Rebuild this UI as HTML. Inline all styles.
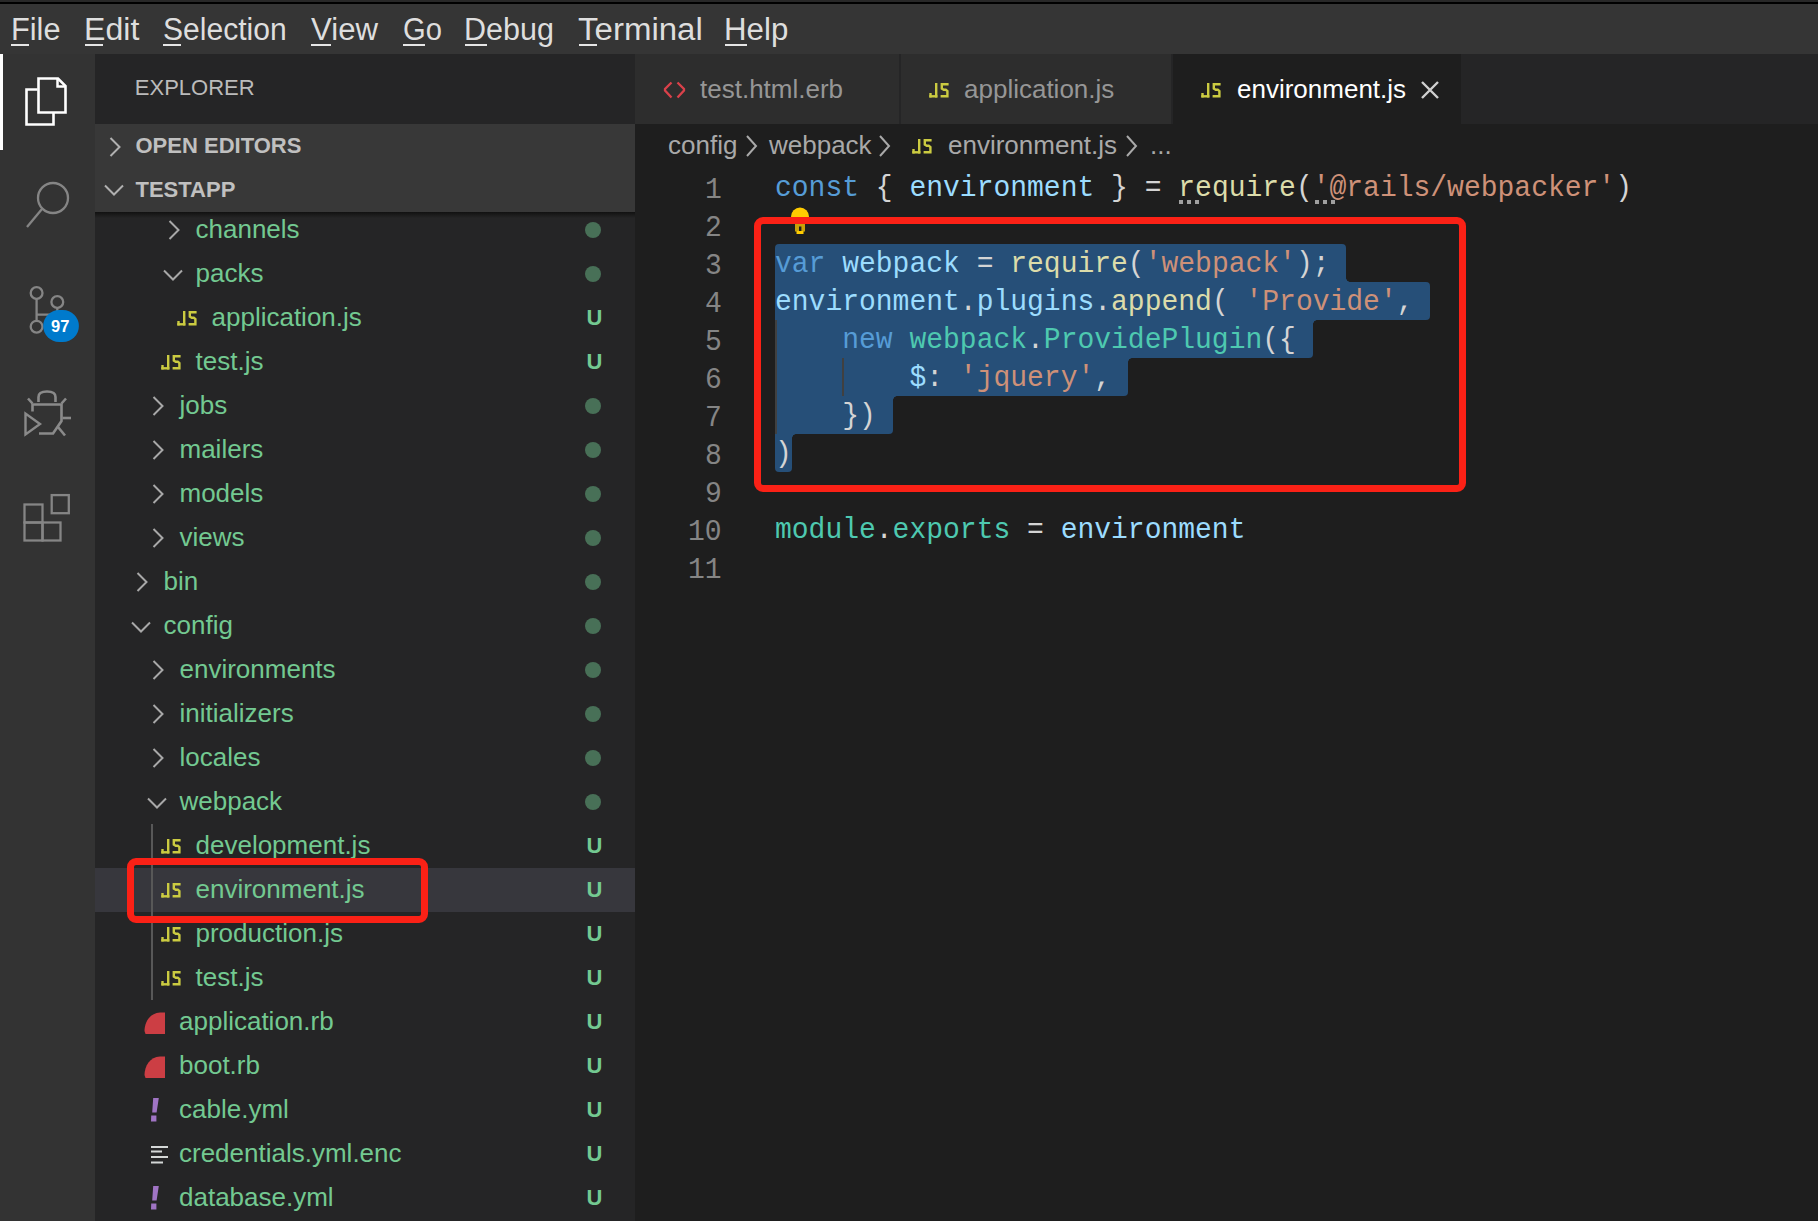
<!DOCTYPE html>
<html><head><meta charset="utf-8"><style>
html,body{margin:0;padding:0;width:1818px;height:1221px;overflow:hidden;background:#1e1e1e;position:relative}
.mw{display:inline-block}
</style></head><body>
<div style="position:absolute;left:0px;top:0px;width:1818px;height:2px;background:#282828;"></div>
<div style="position:absolute;left:0px;top:2px;width:1818px;height:2.2px;background:#000000;"></div>
<div style="position:absolute;left:0px;top:4.2px;width:1818px;height:49.8px;background:#353535;"></div>
<div style="position:absolute;left:10.71px;top:29.56px;font-family:'Liberation Sans', sans-serif;font-size:31px;line-height:0;white-space:pre;color:#dedede;font-weight:normal;transform:scaleX(0.9916);transform-origin:0 0;">File</div>
<div style="position:absolute;left:83.5px;top:29.56px;font-family:'Liberation Sans', sans-serif;font-size:31px;line-height:0;white-space:pre;color:#dedede;font-weight:normal;transform:scaleX(1.0355);transform-origin:0 0;">Edit</div>
<div style="position:absolute;left:163.03px;top:29.56px;font-family:'Liberation Sans', sans-serif;font-size:31px;line-height:0;white-space:pre;color:#dedede;font-weight:normal;transform:scaleX(0.9696);transform-origin:0 0;">Selection</div>
<div style="position:absolute;left:311.2px;top:29.56px;font-family:'Liberation Sans', sans-serif;font-size:31px;line-height:0;white-space:pre;color:#dedede;font-weight:normal;transform:scaleX(1.0045);transform-origin:0 0;">View</div>
<div style="position:absolute;left:403.29px;top:29.56px;font-family:'Liberation Sans', sans-serif;font-size:31px;line-height:0;white-space:pre;color:#dedede;font-weight:normal;transform:scaleX(0.941);transform-origin:0 0;">Go</div>
<div style="position:absolute;left:464.43px;top:29.56px;font-family:'Liberation Sans', sans-serif;font-size:31px;line-height:0;white-space:pre;color:#dedede;font-weight:normal;transform:scaleX(0.984);transform-origin:0 0;">Debug</div>
<div style="position:absolute;left:578.41px;top:29.56px;font-family:'Liberation Sans', sans-serif;font-size:31px;line-height:0;white-space:pre;color:#dedede;font-weight:normal;transform:scaleX(1.0653);transform-origin:0 0;">Terminal</div>
<div style="position:absolute;left:723.98px;top:29.56px;font-family:'Liberation Sans', sans-serif;font-size:31px;line-height:0;white-space:pre;color:#dedede;font-weight:normal;transform:scaleX(1.0083);transform-origin:0 0;">Help</div>
<div style="position:absolute;left:11px;top:43.8px;width:18.1px;height:2.2px;background:#e6e6e6;"></div>
<div style="position:absolute;left:85.4px;top:43.8px;width:17.6px;height:2.2px;background:#e6e6e6;"></div>
<div style="position:absolute;left:163.3px;top:43.8px;width:17.6px;height:2.2px;background:#e6e6e6;"></div>
<div style="position:absolute;left:311.3px;top:43.8px;width:19.4px;height:2.2px;background:#e6e6e6;"></div>
<div style="position:absolute;left:403px;top:43.8px;width:21.6px;height:2.2px;background:#e6e6e6;"></div>
<div style="position:absolute;left:465px;top:43.8px;width:22px;height:2.2px;background:#e6e6e6;"></div>
<div style="position:absolute;left:579px;top:43.8px;width:18px;height:2.2px;background:#e6e6e6;"></div>
<div style="position:absolute;left:725.3px;top:43.8px;width:22.0px;height:2.2px;background:#e6e6e6;"></div>
<div style="position:absolute;left:0px;top:54px;width:95px;height:1167px;background:#333333;"></div>
<div style="position:absolute;left:0px;top:54px;width:3px;height:96px;background:#ffffff;"></div>
<svg style="position:absolute;left:0;top:54px" width="95" height="520" viewBox="0 54 95 520">
 <g fill="none" stroke="#ffffff" stroke-width="2.6">
  <path d="M37.5 89.5 H26.5 V124.5 H53.5 V112.5"/>
  <path d="M38.5 78.5 H58 L65.5 86 V112.5 H38.5 Z"/>
  <path d="M57.5 79 V86.5 H65" stroke-width="2.5"/>
 </g>
 <g fill="none" stroke="#858585" stroke-width="2.3">
  <circle cx="53" cy="198" r="15"/>
  <path d="M42 209 L27 227"/>
 </g>
 <g fill="none" stroke="#858585" stroke-width="2.3">
  <circle cx="36.6" cy="293" r="5.9"/>
  <circle cx="57.3" cy="302" r="5.9"/>
  <circle cx="36.6" cy="326.7" r="5.9"/>
  <path d="M36.6 299 V320.5"/>
  <path d="M57.3 308 V312 Q57.3 314.6 54 314.6 H37"/>
 </g>
 <rect x="43.2" y="310" width="35.7" height="32" rx="16" fill="#007acc"/>
 <g fill="none" stroke="#8a8a8a" stroke-width="2.6" stroke-linejoin="miter">
  <path d="M38.5 402 V397 Q38.5 391.5 47 391.5 Q55.5 391.5 55.5 397 V402"/>
  <path d="M32.5 411.5 V404.5 H61.5 V421 L53 433.5 H39"/>
  <path d="M28 398.5 L32.5 403.5"/>
  <path d="M66 398.5 L61.5 403.5"/>
  <path d="M62.5 418 H71"/>
  <path d="M58 427 L65 435.5"/>
  <path d="M25.5 413.5 V434.5 L40 424 Z" stroke-width="2.4"/>
 </g>
 <g fill="none" stroke="#858585" stroke-width="2.3">
  <rect x="24.5" y="504.5" width="18" height="18"/>
  <rect x="24.5" y="522.5" width="18" height="18"/>
  <rect x="42.5" y="522.5" width="18" height="18"/>
  <rect x="51.7" y="495.1" width="17.1" height="18.1"/>
 </g>
</svg>
<div style="position:absolute;left:51px;top:326.28px;font-family:'Liberation Sans', sans-serif;font-size:16.5px;line-height:0;white-space:pre;color:#ffffff;font-weight:bold;">97</div>
<div style="position:absolute;left:95px;top:54px;width:540px;height:1167px;background:#252526;"></div>
<div style="position:absolute;left:134.8px;top:88.08px;font-family:'Liberation Sans', sans-serif;font-size:22px;line-height:0;white-space:pre;color:#bbbbbb;font-weight:normal;">EXPLORER</div>
<div style="position:absolute;left:95px;top:124px;width:540px;height:88px;background:#383838;"></div>
<div style="position:absolute;left:135.5px;top:145.88px;font-family:'Liberation Sans', sans-serif;font-size:22px;line-height:0;white-space:pre;color:#c0c0c0;font-weight:bold;">OPEN EDITORS</div>
<div style="position:absolute;left:135.5px;top:189.88px;font-family:'Liberation Sans', sans-serif;font-size:22px;line-height:0;white-space:pre;color:#c0c0c0;font-weight:bold;">TESTAPP</div>
<svg style="position:absolute;left:107px;top:134.5px" width="16" height="24"><path d="M3.5 3 L12.5 12 L3.5 21" fill="none" stroke="#b0b0b0" stroke-width="2"/></svg>
<svg style="position:absolute;left:102px;top:182px" width="24" height="16"><path d="M3 3.5 L12 12.5 L21 3.5" fill="none" stroke="#b0b0b0" stroke-width="2"/></svg>
<div style="position:absolute;left:95px;top:868px;width:540px;height:44px;background:#37373d;"></div>
<div style="position:absolute;left:151px;top:824px;width:2px;height:176px;background:#585858;"></div>
<svg style="position:absolute;left:165.5px;top:218px" width="16" height="24"><path d="M3.5 3 L12.5 12 L3.5 21" fill="none" stroke="#a8a8a8" stroke-width="2"/></svg>
<div style="position:absolute;left:195.5px;top:228.99px;font-family:'Liberation Sans', sans-serif;font-size:26px;line-height:0;white-space:pre;color:#73c991;font-weight:normal;">channels</div>
<div style="position:absolute;left:585px;top:222px;width:16px;height:16px;border-radius:50%;background:#487057"></div>
<svg style="position:absolute;left:161.0px;top:266.7px" width="24" height="16"><path d="M3 3.5 L12 12.5 L21 3.5" fill="none" stroke="#a8a8a8" stroke-width="2"/></svg>
<div style="position:absolute;left:195.5px;top:272.99px;font-family:'Liberation Sans', sans-serif;font-size:26px;line-height:0;white-space:pre;color:#73c991;font-weight:normal;">packs</div>
<div style="position:absolute;left:585px;top:266px;width:16px;height:16px;border-radius:50%;background:#487057"></div>
<svg style="position:absolute;left:176.5px;top:310px" width="22" height="17" viewBox="0 0 22 17"><g fill="#cbcb41"><rect x="6" y="1" width="2.4" height="14.5"/><rect x="0.3" y="13.1" width="8.1" height="2.4"/><rect x="0.3" y="11" width="2.4" height="4.5"/><path d="M11.6 1 H19.6 V3.4 H14 V6 L15 6.6 H17.2 L19.6 8.6 V15.5 H11.6 V13.1 H17.2 V9.6 L16.4 9 H14.4 L11.6 7.2 Z"/></g></svg>
<div style="position:absolute;left:211.5px;top:316.99px;font-family:'Liberation Sans', sans-serif;font-size:26px;line-height:0;white-space:pre;color:#73c991;font-weight:normal;">application.js</div>
<div style="position:absolute;left:586.6px;top:318.08px;font-family:'Liberation Sans', sans-serif;font-size:22px;line-height:0;white-space:pre;color:#73c991;font-weight:bold;">U</div>
<svg style="position:absolute;left:160.5px;top:354px" width="22" height="17" viewBox="0 0 22 17"><g fill="#cbcb41"><rect x="6" y="1" width="2.4" height="14.5"/><rect x="0.3" y="13.1" width="8.1" height="2.4"/><rect x="0.3" y="11" width="2.4" height="4.5"/><path d="M11.6 1 H19.6 V3.4 H14 V6 L15 6.6 H17.2 L19.6 8.6 V15.5 H11.6 V13.1 H17.2 V9.6 L16.4 9 H14.4 L11.6 7.2 Z"/></g></svg>
<div style="position:absolute;left:195.5px;top:360.99px;font-family:'Liberation Sans', sans-serif;font-size:26px;line-height:0;white-space:pre;color:#73c991;font-weight:normal;">test.js</div>
<div style="position:absolute;left:586.6px;top:362.08px;font-family:'Liberation Sans', sans-serif;font-size:22px;line-height:0;white-space:pre;color:#73c991;font-weight:bold;">U</div>
<svg style="position:absolute;left:149.5px;top:394px" width="16" height="24"><path d="M3.5 3 L12.5 12 L3.5 21" fill="none" stroke="#a8a8a8" stroke-width="2"/></svg>
<div style="position:absolute;left:179.5px;top:404.99px;font-family:'Liberation Sans', sans-serif;font-size:26px;line-height:0;white-space:pre;color:#73c991;font-weight:normal;">jobs</div>
<div style="position:absolute;left:585px;top:398px;width:16px;height:16px;border-radius:50%;background:#487057"></div>
<svg style="position:absolute;left:149.5px;top:438px" width="16" height="24"><path d="M3.5 3 L12.5 12 L3.5 21" fill="none" stroke="#a8a8a8" stroke-width="2"/></svg>
<div style="position:absolute;left:179.5px;top:448.99px;font-family:'Liberation Sans', sans-serif;font-size:26px;line-height:0;white-space:pre;color:#73c991;font-weight:normal;">mailers</div>
<div style="position:absolute;left:585px;top:442px;width:16px;height:16px;border-radius:50%;background:#487057"></div>
<svg style="position:absolute;left:149.5px;top:482px" width="16" height="24"><path d="M3.5 3 L12.5 12 L3.5 21" fill="none" stroke="#a8a8a8" stroke-width="2"/></svg>
<div style="position:absolute;left:179.5px;top:492.99px;font-family:'Liberation Sans', sans-serif;font-size:26px;line-height:0;white-space:pre;color:#73c991;font-weight:normal;">models</div>
<div style="position:absolute;left:585px;top:486px;width:16px;height:16px;border-radius:50%;background:#487057"></div>
<svg style="position:absolute;left:149.5px;top:526px" width="16" height="24"><path d="M3.5 3 L12.5 12 L3.5 21" fill="none" stroke="#a8a8a8" stroke-width="2"/></svg>
<div style="position:absolute;left:179.5px;top:536.99px;font-family:'Liberation Sans', sans-serif;font-size:26px;line-height:0;white-space:pre;color:#73c991;font-weight:normal;">views</div>
<div style="position:absolute;left:585px;top:530px;width:16px;height:16px;border-radius:50%;background:#487057"></div>
<svg style="position:absolute;left:133.5px;top:570px" width="16" height="24"><path d="M3.5 3 L12.5 12 L3.5 21" fill="none" stroke="#a8a8a8" stroke-width="2"/></svg>
<div style="position:absolute;left:163.5px;top:580.99px;font-family:'Liberation Sans', sans-serif;font-size:26px;line-height:0;white-space:pre;color:#73c991;font-weight:normal;">bin</div>
<div style="position:absolute;left:585px;top:574px;width:16px;height:16px;border-radius:50%;background:#487057"></div>
<svg style="position:absolute;left:129.0px;top:618.7px" width="24" height="16"><path d="M3 3.5 L12 12.5 L21 3.5" fill="none" stroke="#a8a8a8" stroke-width="2"/></svg>
<div style="position:absolute;left:163.5px;top:624.99px;font-family:'Liberation Sans', sans-serif;font-size:26px;line-height:0;white-space:pre;color:#73c991;font-weight:normal;">config</div>
<div style="position:absolute;left:585px;top:618px;width:16px;height:16px;border-radius:50%;background:#487057"></div>
<svg style="position:absolute;left:149.5px;top:658px" width="16" height="24"><path d="M3.5 3 L12.5 12 L3.5 21" fill="none" stroke="#a8a8a8" stroke-width="2"/></svg>
<div style="position:absolute;left:179.5px;top:668.99px;font-family:'Liberation Sans', sans-serif;font-size:26px;line-height:0;white-space:pre;color:#73c991;font-weight:normal;">environments</div>
<div style="position:absolute;left:585px;top:662px;width:16px;height:16px;border-radius:50%;background:#487057"></div>
<svg style="position:absolute;left:149.5px;top:702px" width="16" height="24"><path d="M3.5 3 L12.5 12 L3.5 21" fill="none" stroke="#a8a8a8" stroke-width="2"/></svg>
<div style="position:absolute;left:179.5px;top:712.99px;font-family:'Liberation Sans', sans-serif;font-size:26px;line-height:0;white-space:pre;color:#73c991;font-weight:normal;">initializers</div>
<div style="position:absolute;left:585px;top:706px;width:16px;height:16px;border-radius:50%;background:#487057"></div>
<svg style="position:absolute;left:149.5px;top:746px" width="16" height="24"><path d="M3.5 3 L12.5 12 L3.5 21" fill="none" stroke="#a8a8a8" stroke-width="2"/></svg>
<div style="position:absolute;left:179.5px;top:756.99px;font-family:'Liberation Sans', sans-serif;font-size:26px;line-height:0;white-space:pre;color:#73c991;font-weight:normal;">locales</div>
<div style="position:absolute;left:585px;top:750px;width:16px;height:16px;border-radius:50%;background:#487057"></div>
<svg style="position:absolute;left:145.0px;top:794.7px" width="24" height="16"><path d="M3 3.5 L12 12.5 L21 3.5" fill="none" stroke="#a8a8a8" stroke-width="2"/></svg>
<div style="position:absolute;left:179.5px;top:800.99px;font-family:'Liberation Sans', sans-serif;font-size:26px;line-height:0;white-space:pre;color:#73c991;font-weight:normal;">webpack</div>
<div style="position:absolute;left:585px;top:794px;width:16px;height:16px;border-radius:50%;background:#487057"></div>
<svg style="position:absolute;left:160.5px;top:838px" width="22" height="17" viewBox="0 0 22 17"><g fill="#cbcb41"><rect x="6" y="1" width="2.4" height="14.5"/><rect x="0.3" y="13.1" width="8.1" height="2.4"/><rect x="0.3" y="11" width="2.4" height="4.5"/><path d="M11.6 1 H19.6 V3.4 H14 V6 L15 6.6 H17.2 L19.6 8.6 V15.5 H11.6 V13.1 H17.2 V9.6 L16.4 9 H14.4 L11.6 7.2 Z"/></g></svg>
<div style="position:absolute;left:195.5px;top:844.99px;font-family:'Liberation Sans', sans-serif;font-size:26px;line-height:0;white-space:pre;color:#73c991;font-weight:normal;">development.js</div>
<div style="position:absolute;left:586.6px;top:846.08px;font-family:'Liberation Sans', sans-serif;font-size:22px;line-height:0;white-space:pre;color:#73c991;font-weight:bold;">U</div>
<svg style="position:absolute;left:160.5px;top:882px" width="22" height="17" viewBox="0 0 22 17"><g fill="#cbcb41"><rect x="6" y="1" width="2.4" height="14.5"/><rect x="0.3" y="13.1" width="8.1" height="2.4"/><rect x="0.3" y="11" width="2.4" height="4.5"/><path d="M11.6 1 H19.6 V3.4 H14 V6 L15 6.6 H17.2 L19.6 8.6 V15.5 H11.6 V13.1 H17.2 V9.6 L16.4 9 H14.4 L11.6 7.2 Z"/></g></svg>
<div style="position:absolute;left:195.5px;top:888.99px;font-family:'Liberation Sans', sans-serif;font-size:26px;line-height:0;white-space:pre;color:#73c991;font-weight:normal;">environment.js</div>
<div style="position:absolute;left:586.6px;top:890.08px;font-family:'Liberation Sans', sans-serif;font-size:22px;line-height:0;white-space:pre;color:#73c991;font-weight:bold;">U</div>
<svg style="position:absolute;left:160.5px;top:926px" width="22" height="17" viewBox="0 0 22 17"><g fill="#cbcb41"><rect x="6" y="1" width="2.4" height="14.5"/><rect x="0.3" y="13.1" width="8.1" height="2.4"/><rect x="0.3" y="11" width="2.4" height="4.5"/><path d="M11.6 1 H19.6 V3.4 H14 V6 L15 6.6 H17.2 L19.6 8.6 V15.5 H11.6 V13.1 H17.2 V9.6 L16.4 9 H14.4 L11.6 7.2 Z"/></g></svg>
<div style="position:absolute;left:195.5px;top:932.99px;font-family:'Liberation Sans', sans-serif;font-size:26px;line-height:0;white-space:pre;color:#73c991;font-weight:normal;">production.js</div>
<div style="position:absolute;left:586.6px;top:934.08px;font-family:'Liberation Sans', sans-serif;font-size:22px;line-height:0;white-space:pre;color:#73c991;font-weight:bold;">U</div>
<svg style="position:absolute;left:160.5px;top:970px" width="22" height="17" viewBox="0 0 22 17"><g fill="#cbcb41"><rect x="6" y="1" width="2.4" height="14.5"/><rect x="0.3" y="13.1" width="8.1" height="2.4"/><rect x="0.3" y="11" width="2.4" height="4.5"/><path d="M11.6 1 H19.6 V3.4 H14 V6 L15 6.6 H17.2 L19.6 8.6 V15.5 H11.6 V13.1 H17.2 V9.6 L16.4 9 H14.4 L11.6 7.2 Z"/></g></svg>
<div style="position:absolute;left:195.5px;top:976.99px;font-family:'Liberation Sans', sans-serif;font-size:26px;line-height:0;white-space:pre;color:#73c991;font-weight:normal;">test.js</div>
<div style="position:absolute;left:586.6px;top:978.08px;font-family:'Liberation Sans', sans-serif;font-size:22px;line-height:0;white-space:pre;color:#73c991;font-weight:bold;">U</div>
<svg style="position:absolute;left:143.5px;top:1011.5px" width="22" height="23" viewBox="0 0 22 23"><path d="M1.5 22 L0.5 19 C0.5 10 6 1 16 0.5 L21 0.5 L21 22 Z" fill="#cc3e44"/></svg>
<div style="position:absolute;left:179px;top:1020.99px;font-family:'Liberation Sans', sans-serif;font-size:26px;line-height:0;white-space:pre;color:#73c991;font-weight:normal;">application.rb</div>
<div style="position:absolute;left:586.6px;top:1022.08px;font-family:'Liberation Sans', sans-serif;font-size:22px;line-height:0;white-space:pre;color:#73c991;font-weight:bold;">U</div>
<svg style="position:absolute;left:143.5px;top:1055.5px" width="22" height="23" viewBox="0 0 22 23"><path d="M1.5 22 L0.5 19 C0.5 10 6 1 16 0.5 L21 0.5 L21 22 Z" fill="#cc3e44"/></svg>
<div style="position:absolute;left:179px;top:1064.99px;font-family:'Liberation Sans', sans-serif;font-size:26px;line-height:0;white-space:pre;color:#73c991;font-weight:normal;">boot.rb</div>
<div style="position:absolute;left:586.6px;top:1066.08px;font-family:'Liberation Sans', sans-serif;font-size:22px;line-height:0;white-space:pre;color:#73c991;font-weight:bold;">U</div>
<svg style="position:absolute;left:150px;top:1098px" width="10" height="26" viewBox="0 0 10 26"><path d="M3.2 0 H8.8 L6.6 14.5 H2.2 Z M1.2 17.6 H6.4 V23.6 H1 Z" fill="#a074c4"/></svg>
<div style="position:absolute;left:179px;top:1108.99px;font-family:'Liberation Sans', sans-serif;font-size:26px;line-height:0;white-space:pre;color:#73c991;font-weight:normal;">cable.yml</div>
<div style="position:absolute;left:586.6px;top:1110.08px;font-family:'Liberation Sans', sans-serif;font-size:22px;line-height:0;white-space:pre;color:#73c991;font-weight:bold;">U</div>
<svg style="position:absolute;left:150.5px;top:1146px" width="18" height="18" viewBox="0 0 18 18"><g fill="#d4d7d6"><rect x="0" y="0" width="17" height="2"/><rect x="0" y="4.5" width="11" height="2"/><rect x="0" y="10" width="17" height="2"/><rect x="0" y="15.5" width="12" height="2"/></g></svg>
<div style="position:absolute;left:179px;top:1152.99px;font-family:'Liberation Sans', sans-serif;font-size:26px;line-height:0;white-space:pre;color:#73c991;font-weight:normal;">credentials.yml.enc</div>
<div style="position:absolute;left:586.6px;top:1154.08px;font-family:'Liberation Sans', sans-serif;font-size:22px;line-height:0;white-space:pre;color:#73c991;font-weight:bold;">U</div>
<svg style="position:absolute;left:150px;top:1186px" width="10" height="26" viewBox="0 0 10 26"><path d="M3.2 0 H8.8 L6.6 14.5 H2.2 Z M1.2 17.6 H6.4 V23.6 H1 Z" fill="#a074c4"/></svg>
<div style="position:absolute;left:179px;top:1196.99px;font-family:'Liberation Sans', sans-serif;font-size:26px;line-height:0;white-space:pre;color:#73c991;font-weight:normal;">database.yml</div>
<div style="position:absolute;left:586.6px;top:1198.08px;font-family:'Liberation Sans', sans-serif;font-size:22px;line-height:0;white-space:pre;color:#73c991;font-weight:bold;">U</div>
<div style="position:absolute;left:95px;top:212px;width:540px;height:6px;background:linear-gradient(#111111, rgba(17,17,17,0));"></div>
<div style="position:absolute;left:127.2px;top:858.2px;width:300.5px;height:64.5px;box-sizing:border-box;border:7px solid #fb2116;border-radius:9px"></div>
<div style="position:absolute;left:635px;top:54px;width:1183px;height:70px;background:#252526;"></div>
<div style="position:absolute;left:635px;top:54px;width:264px;height:70px;background:#2d2d2d;"></div>
<div style="position:absolute;left:901px;top:54px;width:270px;height:70px;background:#2d2d2d;"></div>
<div style="position:absolute;left:1173px;top:54px;width:288px;height:70px;background:#1e1e1e;"></div>
<div style="position:absolute;left:635px;top:124px;width:1183px;height:1097px;background:#1e1e1e;"></div>
<svg style="position:absolute;left:662px;top:80px" width="24" height="20" viewBox="0 0 24 20"><path d="M9.5 2.5 L3 9 V10.5 L9.5 17.5 M15.5 2.5 L22 9 V10.5 L15.5 17.5" fill="none" stroke="#d9414a" stroke-width="2.3"/></svg>
<div style="position:absolute;left:700px;top:88.89px;font-family:'Liberation Sans', sans-serif;font-size:26px;line-height:0;white-space:pre;color:#969696;font-weight:normal;">test.html.erb</div>
<svg style="position:absolute;left:929px;top:82px" width="22" height="17" viewBox="0 0 22 17"><g fill="#cbcb41"><rect x="6" y="1" width="2.4" height="14.5"/><rect x="0.3" y="13.1" width="8.1" height="2.4"/><rect x="0.3" y="11" width="2.4" height="4.5"/><path d="M11.6 1 H19.6 V3.4 H14 V6 L15 6.6 H17.2 L19.6 8.6 V15.5 H11.6 V13.1 H17.2 V9.6 L16.4 9 H14.4 L11.6 7.2 Z"/></g></svg>
<div style="position:absolute;left:964px;top:88.89px;font-family:'Liberation Sans', sans-serif;font-size:26px;line-height:0;white-space:pre;color:#969696;font-weight:normal;">application.js</div>
<svg style="position:absolute;left:1201px;top:82px" width="22" height="17" viewBox="0 0 22 17"><g fill="#cbcb41"><rect x="6" y="1" width="2.4" height="14.5"/><rect x="0.3" y="13.1" width="8.1" height="2.4"/><rect x="0.3" y="11" width="2.4" height="4.5"/><path d="M11.6 1 H19.6 V3.4 H14 V6 L15 6.6 H17.2 L19.6 8.6 V15.5 H11.6 V13.1 H17.2 V9.6 L16.4 9 H14.4 L11.6 7.2 Z"/></g></svg>
<div style="position:absolute;left:1237px;top:88.89px;font-family:'Liberation Sans', sans-serif;font-size:26px;line-height:0;white-space:pre;color:#ffffff;font-weight:normal;">environment.js</div>
<svg style="position:absolute;left:1419px;top:79px" width="22" height="22" viewBox="0 0 22 22"><path d="M3 3 L19 19 M19 3 L3 19" stroke="#d0d0d0" stroke-width="2.4"/></svg>
<div style="position:absolute;left:668px;top:144.99px;font-family:'Liberation Sans', sans-serif;font-size:26px;line-height:0;white-space:pre;color:#a9a9a9;font-weight:normal;">config</div>
<svg style="position:absolute;left:744px;top:134px" width="14" height="24" viewBox="0 0 14 24"><path d="M3 2 L12 12 L3 22" fill="none" stroke="#a9a9a9" stroke-width="2"/></svg>
<div style="position:absolute;left:769px;top:144.99px;font-family:'Liberation Sans', sans-serif;font-size:26px;line-height:0;white-space:pre;color:#a9a9a9;font-weight:normal;">webpack</div>
<svg style="position:absolute;left:877px;top:134px" width="14" height="24" viewBox="0 0 14 24"><path d="M3 2 L12 12 L3 22" fill="none" stroke="#a9a9a9" stroke-width="2"/></svg>
<svg style="position:absolute;left:912px;top:138px" width="22" height="17" viewBox="0 0 22 17"><g fill="#cbcb41"><rect x="6" y="1" width="2.4" height="14.5"/><rect x="0.3" y="13.1" width="8.1" height="2.4"/><rect x="0.3" y="11" width="2.4" height="4.5"/><path d="M11.6 1 H19.6 V3.4 H14 V6 L15 6.6 H17.2 L19.6 8.6 V15.5 H11.6 V13.1 H17.2 V9.6 L16.4 9 H14.4 L11.6 7.2 Z"/></g></svg>
<div style="position:absolute;left:948px;top:144.99px;font-family:'Liberation Sans', sans-serif;font-size:26px;line-height:0;white-space:pre;color:#a9a9a9;font-weight:normal;">environment.js</div>
<svg style="position:absolute;left:1124px;top:134px" width="14" height="24" viewBox="0 0 14 24"><path d="M3 2 L12 12 L3 22" fill="none" stroke="#a9a9a9" stroke-width="2"/></svg>
<div style="position:absolute;left:1150px;top:144.99px;font-family:'Liberation Sans', sans-serif;font-size:26px;line-height:0;white-space:pre;color:#a9a9a9;font-weight:normal;">...</div>
<div style="position:absolute;left:705.2px;top:190.22px;font-family:'Liberation Mono', monospace;font-size:30px;line-height:0;white-space:pre;color:#858585;font-weight:normal;transform:scaleX(0.93333);transform-origin:0 0;">1</div>
<div style="position:absolute;left:705.2px;top:228.22px;font-family:'Liberation Mono', monospace;font-size:30px;line-height:0;white-space:pre;color:#858585;font-weight:normal;transform:scaleX(0.93333);transform-origin:0 0;">2</div>
<div style="position:absolute;left:705.2px;top:266.22px;font-family:'Liberation Mono', monospace;font-size:30px;line-height:0;white-space:pre;color:#858585;font-weight:normal;transform:scaleX(0.93333);transform-origin:0 0;">3</div>
<div style="position:absolute;left:705.2px;top:304.22px;font-family:'Liberation Mono', monospace;font-size:30px;line-height:0;white-space:pre;color:#858585;font-weight:normal;transform:scaleX(0.93333);transform-origin:0 0;">4</div>
<div style="position:absolute;left:705.2px;top:342.22px;font-family:'Liberation Mono', monospace;font-size:30px;line-height:0;white-space:pre;color:#858585;font-weight:normal;transform:scaleX(0.93333);transform-origin:0 0;">5</div>
<div style="position:absolute;left:705.2px;top:380.22px;font-family:'Liberation Mono', monospace;font-size:30px;line-height:0;white-space:pre;color:#858585;font-weight:normal;transform:scaleX(0.93333);transform-origin:0 0;">6</div>
<div style="position:absolute;left:705.2px;top:418.22px;font-family:'Liberation Mono', monospace;font-size:30px;line-height:0;white-space:pre;color:#858585;font-weight:normal;transform:scaleX(0.93333);transform-origin:0 0;">7</div>
<div style="position:absolute;left:705.2px;top:456.22px;font-family:'Liberation Mono', monospace;font-size:30px;line-height:0;white-space:pre;color:#858585;font-weight:normal;transform:scaleX(0.93333);transform-origin:0 0;">8</div>
<div style="position:absolute;left:705.2px;top:494.22px;font-family:'Liberation Mono', monospace;font-size:30px;line-height:0;white-space:pre;color:#858585;font-weight:normal;transform:scaleX(0.93333);transform-origin:0 0;">9</div>
<div style="position:absolute;left:688.4px;top:532.22px;font-family:'Liberation Mono', monospace;font-size:30px;line-height:0;white-space:pre;color:#858585;font-weight:normal;transform:scaleX(0.93333);transform-origin:0 0;">10</div>
<div style="position:absolute;left:688.4px;top:570.22px;font-family:'Liberation Mono', monospace;font-size:30px;line-height:0;white-space:pre;color:#858585;font-weight:normal;transform:scaleX(0.93333);transform-origin:0 0;">11</div>
<div style="position:absolute;left:775px;top:244px;width:571.2px;height:38px;background:#264f78;border-radius:4px 4px 0px 0px"></div>
<div style="position:absolute;left:1346.2px;top:278px;width:4px;height:4px;background:radial-gradient(circle at 4px 0px, transparent 3.5px, #264f78 4px)"></div>
<div style="position:absolute;left:775px;top:282px;width:655.2px;height:38px;background:#264f78;border-radius:0px 4px 4px 0px"></div>
<div style="position:absolute;left:775px;top:320px;width:537.6px;height:38px;background:#264f78;border-radius:0px 0px 4px 0px"></div>
<div style="position:absolute;left:1312.6px;top:320px;width:4px;height:4px;background:radial-gradient(circle at 4px 4px, transparent 3.5px, #264f78 4px)"></div>
<div style="position:absolute;left:775px;top:358px;width:352.8px;height:38px;background:#264f78;border-radius:0px 0px 4px 0px"></div>
<div style="position:absolute;left:1127.8px;top:358px;width:4px;height:4px;background:radial-gradient(circle at 4px 4px, transparent 3.5px, #264f78 4px)"></div>
<div style="position:absolute;left:775px;top:396px;width:117.6px;height:38px;background:#264f78;border-radius:0px 0px 4px 0px"></div>
<div style="position:absolute;left:892.6px;top:396px;width:4px;height:4px;background:radial-gradient(circle at 4px 4px, transparent 3.5px, #264f78 4px)"></div>
<div style="position:absolute;left:775px;top:434px;width:16.8px;height:38px;background:#264f78;border-radius:0px 0px 4px 4px"></div>
<div style="position:absolute;left:791.8px;top:434px;width:4px;height:4px;background:radial-gradient(circle at 4px 4px, transparent 3.5px, #264f78 4px)"></div>
<div style="position:absolute;left:775px;top:320px;width:2px;height:114px;background:#404040;"></div>
<div style="position:absolute;left:842px;top:358px;width:2px;height:38px;background:#404040;"></div>
<div style="position:absolute;left:775px;top:188.05px;font-family:'Liberation Mono', monospace;font-size:29.5px;line-height:0;white-space:pre;color:#d4d4d4;font-weight:normal;transform:scaleX(0.94915);transform-origin:0 0;"><span style="color:#569cd6">const</span><span style="color:#d4d4d4"> { </span><span style="color:#9cdcfe">environment</span><span style="color:#d4d4d4"> } = </span><span style="color:#dcdcaa">require</span><span style="color:#d4d4d4">(</span><span style="color:#ce9178">'@rails/webpacker'</span><span style="color:#d4d4d4">)</span></div>
<div style="position:absolute;left:775px;top:264.05px;font-family:'Liberation Mono', monospace;font-size:29.5px;line-height:0;white-space:pre;color:#d4d4d4;font-weight:normal;transform:scaleX(0.94915);transform-origin:0 0;"><span style="color:#569cd6">var</span> <span style="color:#9cdcfe">webpack</span><span style="color:#d4d4d4"> = </span><span style="color:#dcdcaa">require</span><span style="color:#d4d4d4">(</span><span style="color:#ce9178">'webpack'</span><span style="color:#d4d4d4">);</span></div>
<div style="position:absolute;left:775px;top:302.05px;font-family:'Liberation Mono', monospace;font-size:29.5px;line-height:0;white-space:pre;color:#d4d4d4;font-weight:normal;transform:scaleX(0.94915);transform-origin:0 0;"><span style="color:#9cdcfe">environment</span><span style="color:#d4d4d4">.</span><span style="color:#9cdcfe">plugins</span><span style="color:#d4d4d4">.</span><span style="color:#dcdcaa">append</span><span style="color:#d4d4d4">( </span><span style="color:#ce9178">'Provide'</span><span style="color:#d4d4d4">,</span></div>
<div style="position:absolute;left:775px;top:340.05px;font-family:'Liberation Mono', monospace;font-size:29.5px;line-height:0;white-space:pre;color:#d4d4d4;font-weight:normal;transform:scaleX(0.94915);transform-origin:0 0;">    <span style="color:#569cd6">new</span> <span style="color:#4ec9b0">webpack</span><span style="color:#d4d4d4">.</span><span style="color:#4ec9b0">ProvidePlugin</span><span style="color:#d4d4d4">({</span></div>
<div style="position:absolute;left:775px;top:378.05px;font-family:'Liberation Mono', monospace;font-size:29.5px;line-height:0;white-space:pre;color:#d4d4d4;font-weight:normal;transform:scaleX(0.94915);transform-origin:0 0;">        <span style="color:#9cdcfe">$</span><span style="color:#d4d4d4">: </span><span style="color:#ce9178">'jquery'</span><span style="color:#d4d4d4">,</span></div>
<div style="position:absolute;left:775px;top:416.05px;font-family:'Liberation Mono', monospace;font-size:29.5px;line-height:0;white-space:pre;color:#d4d4d4;font-weight:normal;transform:scaleX(0.94915);transform-origin:0 0;">    <span style="color:#d4d4d4">})</span></div>
<div style="position:absolute;left:775px;top:454.05px;font-family:'Liberation Mono', monospace;font-size:29.5px;line-height:0;white-space:pre;color:#d4d4d4;font-weight:normal;transform:scaleX(0.94915);transform-origin:0 0;"><span style="color:#d4d4d4">)</span></div>
<div style="position:absolute;left:775px;top:530.05px;font-family:'Liberation Mono', monospace;font-size:29.5px;line-height:0;white-space:pre;color:#d4d4d4;font-weight:normal;transform:scaleX(0.94915);transform-origin:0 0;"><span style="color:#4ec9b0">module</span><span style="color:#d4d4d4">.</span><span style="color:#4ec9b0">exports</span><span style="color:#d4d4d4"> = </span><span style="color:#9cdcfe">environment</span></div>
<div style="position:absolute;left:1179px;top:200px;width:4px;height:4px;background:#a0a0a0;"></div>
<div style="position:absolute;left:1187px;top:200px;width:4px;height:4px;background:#a0a0a0;"></div>
<div style="position:absolute;left:1195px;top:200px;width:4px;height:4px;background:#a0a0a0;"></div>
<div style="position:absolute;left:1315px;top:200px;width:4px;height:4px;background:#a0a0a0;"></div>
<div style="position:absolute;left:1323px;top:200px;width:4px;height:4px;background:#a0a0a0;"></div>
<div style="position:absolute;left:1331px;top:200px;width:4px;height:4px;background:#a0a0a0;"></div>
<svg style="position:absolute;left:789px;top:207px" width="22" height="28" viewBox="0 0 22 28"><circle cx="11" cy="9.5" r="9" fill="#ffcc00"/><rect x="6" y="15" width="10" height="4" fill="#ffcc00"/><rect x="6" y="17" width="10" height="7.5" fill="#c9a208"/><rect x="7.5" y="24" width="7" height="3" fill="#ffcc00"/><rect x="10" y="19.5" width="2.4" height="4.5" fill="#1e1e1e"/></svg>
<div style="position:absolute;left:754px;top:217px;width:712px;height:275px;box-sizing:border-box;border:7px solid #fb2116;border-radius:9px"></div>
</body></html>
